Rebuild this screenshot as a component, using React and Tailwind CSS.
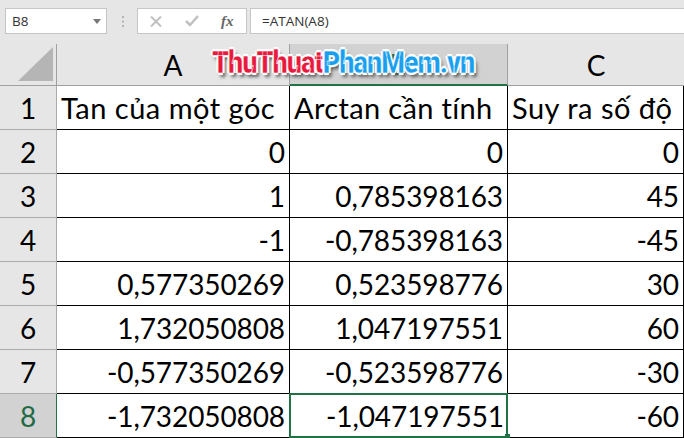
import React from 'react';

const rows = [
  ['0', '0', '0'],
  ['1', '0,785398163', '45'],
  ['-1', '-0,785398163', '-45'],
  ['0,577350269', '0,523598776', '30'],
  ['1,732050808', '1,047197551', '60'],
  ['-0,577350269', '-0,523598776', '-30'],
];

function RowHead({ n, active }) {
  return (
    <div className={`h-[44px] flex items-center justify-center text-[28px] border-b border-r ${active ? 'bg-[#d2d2d2] text-[#1f6b45] border-r-[#217346] border-b-[#ababab]' : 'bg-[#e6e6e6] text-black border-[#ababab]'}`}>
      {n}
    </div>
  );
}

function Cell({ children, right, className = '' }) {
  return (
    <div className={`h-[44px] flex items-center whitespace-nowrap overflow-hidden bg-white border-b border-r border-black text-black ${right ? 'justify-end pr-[4px] text-[28px] tracking-[-0.1px]' : 'pl-[4px] text-[29px] tracking-[0.5px]'} ${className}`}>
      {children}
    </div>
  );
}

export default function App() {
  return (
    <div className="relative w-[684px] h-[438px] overflow-hidden bg-[#e6e6e6] font-['Lato','Open_Sans',sans-serif]">
      {/* Thanh công thức */}
      <div className="h-[44px] flex items-start pt-[8px] font-['Open_Sans',sans-serif] text-[13.5px] text-[#333]">
        <div className="ml-[5px] w-[102px] h-[26px] bg-white border border-[#c6c6c6] flex items-center justify-between pl-[6px] pr-[5px]">
          <span>B8</span>
          <svg width="8" height="5" viewBox="0 0 8 5"><path d="M0 0h8L4 5z" fill="#777" /></svg>
        </div>
        <div className="w-[30px] h-[26px] flex items-center justify-center">
          <svg width="3" height="11" viewBox="0 0 3 11" fill="#b4b4b4"><rect x="1" width="2" height="2" /><rect x="1" y="4.500" width="2" height="2" /><rect x="1" y="9" width="2" height="2" /></svg>
        </div>
        <div className="w-[110px] h-[26px] bg-white border border-[#c6c6c6] flex items-center pl-[12px]">
          <svg width="12" height="11" viewBox="0 0 12 11" stroke="#c0c0c0" strokeWidth="2"><path d="M1 .5l10 10M11 .5l-10 10" /></svg>
          <svg className="ml-[23px]" width="14" height="12" viewBox="0 0 14 12" fill="none" stroke="#c0c0c0" strokeWidth="2.500"><path d="M1 6l4 4 8-9" /></svg>
          <span className="ml-[22px] font-['Liberation_Serif',serif] italic font-bold text-[15px] text-[#666]">fx</span>
        </div>
        <div className="ml-[3px] flex-1 h-[26px] bg-white border-y border-l border-[#c6c6c6] flex items-center pl-[11px]">=ATAN(A8)</div>
      </div>

      {/* Bảng */}
      <div className="grid grid-cols-[57px_233px_218px_176px]">
        <div className="h-[42px] bg-[#e6e6e6] border-b border-r border-[#a0a0a0] flex items-end justify-end pr-[3px] pb-[4px]">
          <div className="w-[35px] h-[34px] bg-[#b5b5b5] [clip-path:polygon(100%_0,100%_100%,0_100%)]" />
        </div>
        <div className="h-[42px] flex items-center justify-center text-[28px] text-black border-r border-b border-[#a0a0a0]">A</div>
        <div className="h-[42px] flex items-center justify-center text-[28px] text-[#1f6b45] bg-[#d2d2d2] border-r border-[#a0a0a0] border-b-2 border-b-[#217346]">B</div>
        <div className="h-[42px] flex items-center justify-center text-[28px] text-black border-b border-[#a0a0a0]">C</div>

        <RowHead n="1" />
        <Cell>Tan của một góc</Cell>
        <Cell className="tracking-[0.35px]!">Arctan cần tính</Cell>
        <Cell>Suy ra số độ</Cell>

        {rows.map((r, i) => (
          <React.Fragment key={i}>
            <RowHead n={i + 2} />
            <Cell right>{r[0]}</Cell>
            <Cell right>{r[1]}</Cell>
            <Cell right>{r[2]}</Cell>
          </React.Fragment>
        ))}

        <RowHead n="8" active />
        <Cell right>-1,732050808</Cell>
        <div className="relative">
          <Cell right className="border-2! border-[#217346]! -mt-px -ml-px h-[45px]! w-[219px]! pr-[2px]!">-1,047197551</Cell>
          <div className="absolute right-[-2px] bottom-0 w-[5px] h-[4px] bg-[#217346]" />
        </div>
        <Cell right>-60</Cell>
      </div>

      {/* Logo watermark */}
      <div className="absolute left-[212px] top-[44px] origin-left scale-x-[0.845] font-['Roboto',sans-serif] font-black text-[32px] leading-[36px] tracking-[-1.2px] whitespace-nowrap [-webkit-text-stroke:0.5px_#fff] [text-shadow:2px_0_0_#fff,-2px_0_0_#fff,0_2px_0_#fff,0_-2px_0_#fff,3px_4px_4px_#555]">
        <span className="text-[#e8193c]">ThuThuat</span>
        <span className="text-[#1a9ff0]">PhanMem.vn</span>
      </div>
    </div>
  );
}
